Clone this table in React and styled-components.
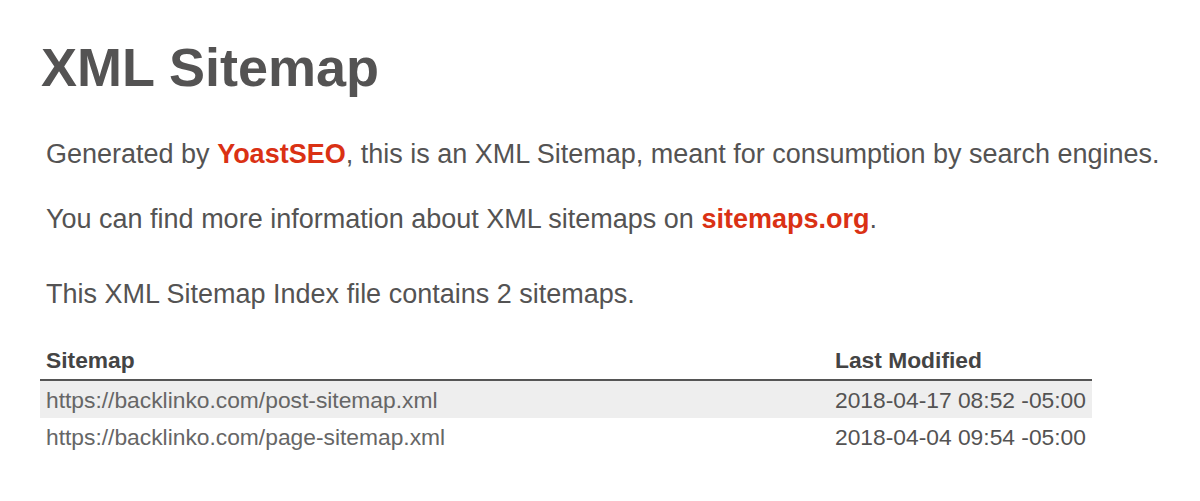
import React from 'react';
import styled, { createGlobalStyle } from 'styled-components';

const GlobalStyle = createGlobalStyle`
    body {
        margin: 0;
        background: #ffffff;
        font-family: "Liberation Sans", Arial, Helvetica, sans-serif;
        color: #545353;
    }
`

const Content = styled.div`
    width: 1052px;
    padding: 0 0 0 40px;
`

const Title = styled.h1`
    font-size: 54px; font-weight: bold;
    line-height: 62px;
    color: #545353;
    margin: 36px 0 0 1px;
`

const Intro = styled.div`
    padding: 40px 0 0 6px;
`

const Expl = styled.p`
    font-size: 27px;
    line-height: 32px;
    margin: 0 0 ${props => props.gap || 33}px 0;
    white-space: nowrap;
`

const Link = styled.a`
    color: #da3114;
    font-weight: bold;
    text-decoration: none;
`

const Table = styled.table`
    width: 100%;
    border-collapse: collapse;
    margin-top: 36px;
    font-size: 22.8px;
`

const Th = styled.th`
    text-align: left;
    font-weight: bold;
    color: #444;
    padding: 0 0 5px 6px;
    line-height: 28px;
    border-bottom: 2px solid #555;
    width: ${props => props.w || 'auto'};
`

const Row = styled.tr`
    background: ${props => props.odd ? '#eeeeee' : 'transparent'};
`

const Td = styled.td`
    padding: 1px 0 0 6px;
    height: 36px;
    line-height: 28px;
    color: ${props => props.light ? '#666' : '#545353'};
`

const sitemaps = [
    { url: 'https://backlinko.com/post-sitemap.xml', date: '2018-04-17 08:52 -05:00' },
    { url: 'https://backlinko.com/page-sitemap.xml', date: '2018-04-04 09:54 -05:00' },
]

function App(){
    return(
        <Content>
            <GlobalStyle/>
            <Title>XML Sitemap</Title>
            <Intro>
                <Expl>Generated by <Link href="#">YoastSEO</Link>, this is an XML Sitemap, meant for consumption by search engines.</Expl>
                <Expl gap={43}>You can find more information about XML sitemaps on <Link href="#">sitemaps.org</Link>.</Expl>
                <Expl gap={1}>This XML Sitemap Index file contains 2 sitemaps.</Expl>
            </Intro>
            <Table>
                <thead>
                    <tr>
                        <Th w="783px">Sitemap</Th>
                        <Th>Last Modified</Th>
                    </tr>
                </thead>
                <tbody>
                    {sitemaps.map((s, i) =>
                        <Row key={s.url} odd={i % 2 === 0}>
                            <Td light>{s.url}</Td>
                            <Td>{s.date}</Td>
                        </Row>
                    )}
                </tbody>
            </Table>
        </Content>
    )
}

export default App;
